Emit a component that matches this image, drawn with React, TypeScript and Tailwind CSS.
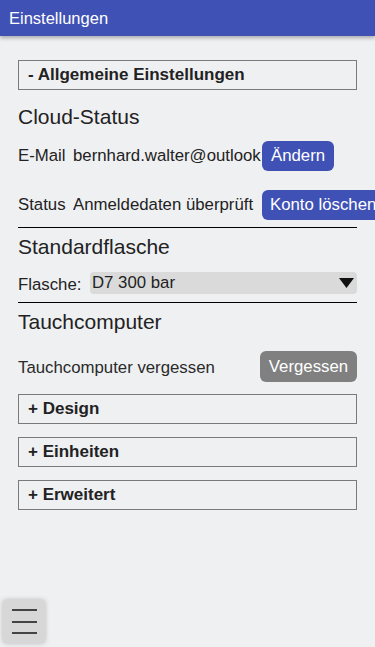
import React from "react";

function Box({ label }: { label: string }) {
  return (
    <div className="h-[30px] border border-[#7a7a7a] flex items-center pl-[9px] font-bold text-[17px] text-[#222]">
      {label}
    </div>
  );
}

export default function App() {
  return (
    <div
      className="relative min-h-[647px] w-full overflow-x-hidden bg-[#eff0f2] text-[#222]"
      style={{ fontFamily: '"Liberation Sans", Arial, sans-serif' }}
    >
      <div className="h-[36px] bg-[#3f51b5] flex items-center pl-[9px] text-white text-[16.5px] shadow-[0_2px_4px_rgba(0,0,0,0.3)]">
        Einstellungen
      </div>
      <div className="px-[18px] flex flex-col">
        <div className="mt-[24px]">
          <Box label="- Allgemeine Einstellungen" />
        </div>
        <div className="mt-[16px] h-[22px] flex items-center text-[21px]">Cloud-Status</div>
        <div className="mt-[13px] h-[30px] flex items-center text-[16.8px] whitespace-nowrap">
          <span className="w-[55px] shrink-0">E-Mail</span>
          <span className="w-[189px] shrink-0">bernhard.walter@outlook</span>
          <button className="h-[30px] px-[9px] shrink-0 rounded-[6px] bg-[#3f51b5] text-white text-[16.8px]">
            Ändern
          </button>
        </div>
        <div className="mt-[19px] h-[30px] flex items-center text-[16.8px] whitespace-nowrap">
          <span className="w-[55px] shrink-0">Status</span>
          <span className="w-[189px] shrink-0 overflow-hidden">Anmeldedaten überprüft</span>
          <button className="h-[30px] px-[8px] shrink-0 rounded-[6px] bg-[#3f51b5] text-white text-[16.8px]">
            Konto löschen
          </button>
        </div>
        <div className="mt-[7px] h-px bg-black" />
        <div className="mt-[8px] h-[22px] flex items-center text-[21px]">Standardflasche</div>
        <div className="mt-[14px] h-[22px] flex items-center text-[16.8px]">
          <span className="w-[72px] shrink-0 pt-[3px]">Flasche:</span>
          <div className="flex-1 h-[22px] bg-[#dadada] rounded-[4px] flex items-center justify-between pl-[2px] pr-[3px]">
            <span>D7 300 bar</span>
            <svg width="15" height="10" viewBox="0 0 15 10">
              <polygon points="0,0 15,0 7.5,10" fill="#111" />
            </svg>
          </div>
        </div>
        <div className="mt-[8px] h-px bg-black" />
        <div className="mt-[8px] h-[22px] flex items-center text-[21px]">Tauchcomputer</div>
        <div className="mt-[18px] h-[31px] flex items-center justify-between text-[16.8px]">
          <span className="pt-[2px] text-[#2a2a2a]">Tauchcomputer vergessen</span>
          <button className="h-[31px] w-[97px] rounded-[6px] bg-[#808080] text-white text-[16.8px]">
            Vergessen
          </button>
        </div>
        <div className="mt-[12px] flex flex-col gap-[13px]">
          <Box label="+ Design" />
          <Box label="+ Einheiten" />
          <Box label="+ Erweitert" />
        </div>
      </div>
      <button className="fixed left-[3px] bottom-[4px] w-[42px] h-[43px] bg-[#d7d7d7] rounded-[3px] shadow-[0_0_5px_rgba(0,0,0,0.25)] flex flex-col items-center justify-center gap-[9.5px]">
        <span className="block w-[25px] h-[2px] bg-[#444]" />
        <span className="block w-[25px] h-[2px] bg-[#444]" />
        <span className="block w-[25px] h-[2px] bg-[#444]" />
      </button>
    </div>
  );
}
